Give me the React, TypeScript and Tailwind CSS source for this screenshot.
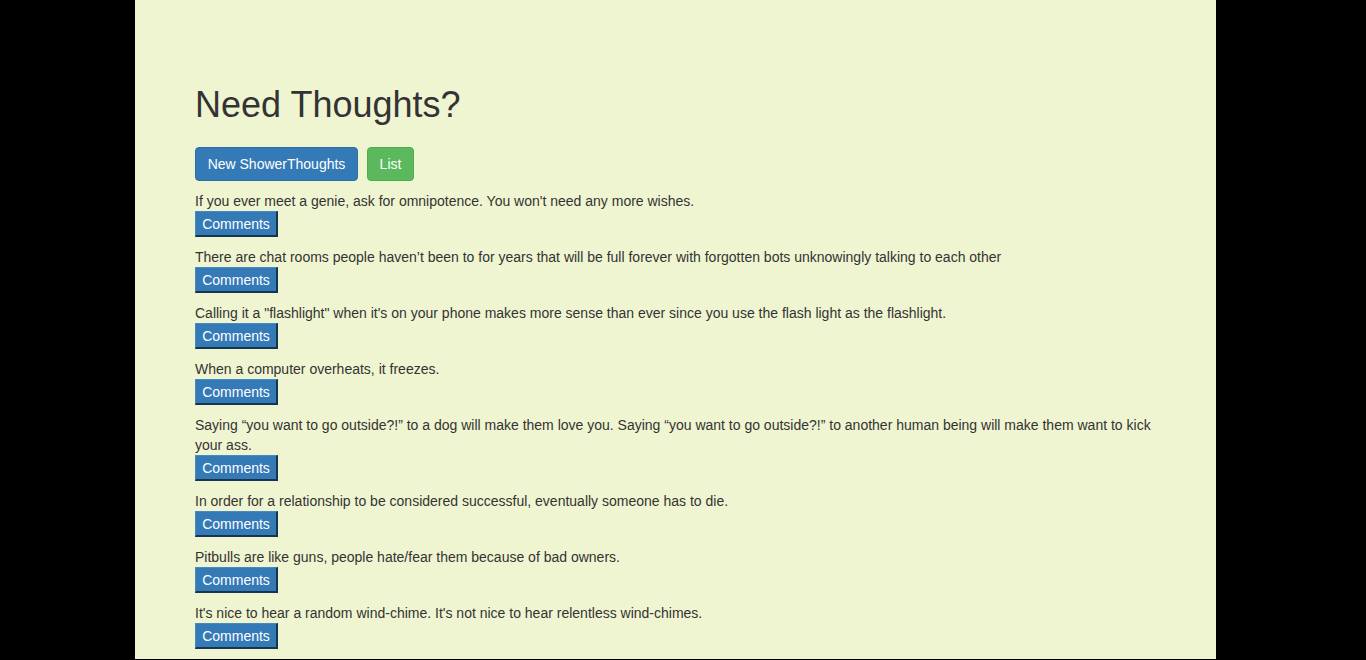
import React from "react";

const thoughts = [
  "If you ever meet a genie, ask for omnipotence. You won't need any more wishes.",
  "There are chat rooms people haven\u2019t been to for years that will be full forever with forgotten bots unknowingly talking to each other",
  "Calling it a \"flashlight\" when it's on your phone makes more sense than ever since you use the flash light as the flashlight.",
  "When a computer overheats, it freezes.",
  "Saying \u201cyou want to go outside?!\u201d to a dog will make them love you. Saying \u201cyou want to go outside?!\u201d to another human being will make them want to kick your ass.",
  "In order for a relationship to be considered successful, eventually someone has to die.",
  "Pitbulls are like guns, people hate/fear them because of bad owners.",
  "It's nice to hear a random wind-chime. It's not nice to hear relentless wind-chimes.",
];

export default function App() {
  return (
    <div
      className="min-h-[660px] w-full bg-black"
      style={{ fontFamily: '"Liberation Sans", Arial, Helvetica, sans-serif' }}
    >
      <div className="ml-[135px] flex w-[1081px] flex-col bg-[#f0f5d1] px-[60px] pt-[85px] pb-[10px] text-[14px] leading-[20px] text-[#333333]">
        <h1 className="mb-[22px] h-[40px] text-[36px] leading-[40px] font-medium">
          Need Thoughts?
        </h1>
        <div className="mb-[10px] flex gap-[9px]">
          <button className="h-[34px] w-[163px] rounded-[4px] border border-[#2e6da4] bg-[#337ab7] text-[14px] leading-[20px] text-white">
            New ShowerThoughts
          </button>
          <button className="h-[34px] w-[47px] rounded-[4px] border border-[#4cae4c] bg-[#5cb85c] text-[14px] leading-[20px] text-white">
            List
          </button>
        </div>
        <div className="flex flex-col">
          {thoughts.map((t, i) => (
            <div key={i} className="flex flex-col items-start pb-[10px] last:pb-0">
              <div className="leading-[20px]">{t}</div>
              <button className="h-[26px] w-[83px] border-t border-l border-r-2 border-b-2 border-t-[#4a89c0] border-l-[#4a89c0] border-r-[#17354f] border-b-[#17354f] bg-[#337ab7] text-[14px] leading-[20px] text-white">
                Comments
              </button>
            </div>
          ))}
        </div>
      </div>
    </div>
  );
}
